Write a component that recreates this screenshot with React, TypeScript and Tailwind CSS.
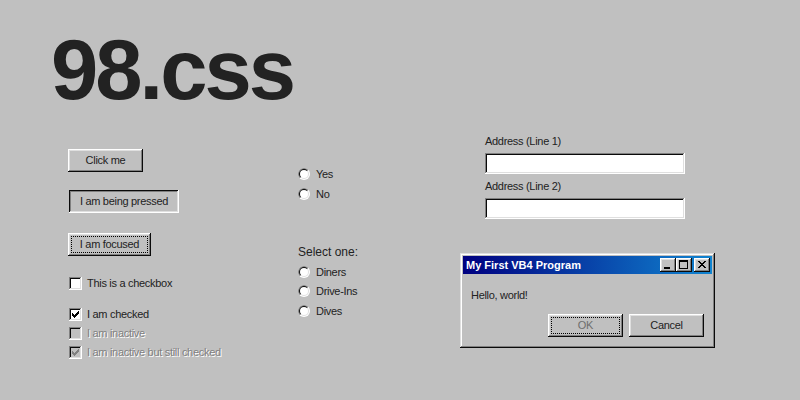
import React from "react";

const raised =
  "shadow-[inset_-1px_-1px_#0a0a0a,inset_1px_1px_#ffffff,inset_-2px_-2px_#808080,inset_2px_2px_#dfdfdf]";
const pressed =
  "shadow-[inset_-1px_-1px_#ffffff,inset_1px_1px_#0a0a0a,inset_-2px_-2px_#dfdfdf,inset_2px_2px_#808080]";
const field =
  "shadow-[inset_-1px_-1px_#ffffff,inset_1px_1px_#808080,inset_-2px_-2px_#dfdfdf,inset_2px_2px_#0a0a0a]";

function Check({ color }: { color: string }) {
  return (
    <svg width="7" height="7" viewBox="0 0 7 7" className="absolute left-[3px] top-[3px]">
      <path
        d="M7 0H6v1H5v1H4v1H3v1H2V3H1V2H0v3h1v1h1v1h1V6h1V5h1V4h1V3h1V0z"
        fill={color}
      />
    </svg>
  );
}

function Checkbox({
  label,
  checked,
  disabled,
  className,
}: {
  label: string;
  checked?: boolean;
  disabled?: boolean;
  className?: string;
}) {
  return (
    <div className={"flex items-center h-[13px] gap-[5px] " + (className ?? "")}>
      <span
        className={
          "relative ml-px w-[13px] h-[13px] " +
          field +
          (disabled ? " bg-[#c0c0c0]" : " bg-white")
        }
      >
        {checked && <Check color={disabled ? "#808080" : "#000000"} />}
      </span>
      <span
        className={
          "leading-[13px] " +
          (disabled ? "text-[#808080] [text-shadow:1px_1px_0_#ffffff]" : "")
        }
      >
        {label}
      </span>
    </div>
  );
}

function Radio({ label, className }: { label: string; className?: string }) {
  return (
    <div className={"flex items-center h-[12px] gap-[6px] " + (className ?? "")}>
      <svg width="12" height="12" viewBox="0 0 12 12">
        <circle cx="6" cy="6" r="6" fill="#ffffff" />
        <path d="M10.243 1.757A6 6 0 0 0 1.757 10.243Z" fill="#808080" />
        <circle cx="6" cy="6" r="5" fill="#dfdfdf" />
        <path d="M9.536 2.464A5 5 0 0 0 2.464 9.536Z" fill="#0a0a0a" />
        <circle cx="6" cy="6" r="4" fill="#ffffff" />
      </svg>
      <span className="leading-[13px]">{label}</span>
    </div>
  );
}

export default function App() {
  return (
    <div className="w-[800px] h-[400px] bg-[#c0c0c0] overflow-hidden text-[#222222] font-['Liberation_Sans',Arial,sans-serif]">
      <div className="pt-[27px] pl-[51px]">
        <h1 className="text-[85px] leading-[85px] font-bold tracking-[-3px] text-[#222222]">98.css</h1>
      </div>
      <div className="flex text-[11px] tracking-[-0.3px]">
        {/* left column */}
        <div className="w-[298px] shrink-0 pl-[68px] flex flex-col items-start">
          <button className={"mt-[37px] h-[23px] w-[75px] bg-[#c0c0c0] " + raised}>Click me</button>
          <button className={"mt-[18px] ml-px h-[23px] w-[110px] bg-[#c0c0c0] " + pressed}>
            I am being pressed
          </button>
          <button
            className={
              "mt-[20px] h-[23px] w-[83px] bg-[#c0c0c0] outline-1 outline-dotted outline-black outline-offset-[-4px] " +
              raised
            }
          >
            I am focused
          </button>
          <Checkbox className="mt-[21px]" label="This is a checkbox" />
          <Checkbox className="mt-[18px]" label="I am checked" checked />
          <Checkbox className="mt-[6px]" label="I am inactive" disabled />
          <Checkbox className="mt-[6px]" label="I am inactive but still checked" checked disabled />
        </div>

        {/* middle column */}
        <div className="w-[162px] shrink-0 flex flex-col items-start">
          <Radio className="mt-[56px]" label="Yes" />
          <Radio className="mt-[8px]" label="No" />
          <div className="mt-[45px] text-[12px] leading-[14px] tracking-normal">Select one:</div>
          <Radio className="mt-[7px]" label="Diners" />
          <Radio className="mt-[7px]" label="Drive-Ins" />
          <Radio className="mt-[8px]" label="Dives" />
        </div>

        {/* right column */}
        <div className="flex flex-col items-start">
          <label className="mt-[23px] ml-[25px] leading-[13px]">Address (Line 1)</label>
          <input className={"mt-[5px] ml-[25px] h-[21px] w-[200px] bg-white outline-none px-[3px] " + field} />
          <label className="mt-[6px] ml-[25px] leading-[13px]">Address (Line 2)</label>
          <input className={"mt-[5px] ml-[25px] h-[21px] w-[200px] bg-white outline-none px-[3px] " + field} />

          <div
            className={
              "mt-[34px] w-[255px] bg-[#c0c0c0] p-[3px] shadow-[inset_-1px_-1px_#0a0a0a,inset_1px_1px_#dfdfdf,inset_-2px_-2px_#808080,inset_2px_2px_#ffffff]"
            }
          >
            <div className="h-[18px] flex items-center justify-between pl-[3px] pr-[2px] bg-[linear-gradient(90deg,#000080,#1084d0)]">
              <span className="text-white font-bold tracking-normal leading-[13px]">My First VB4 Program</span>
              <div className="flex">
                <button aria-label="Minimize" className={"relative w-[16px] h-[14px] bg-[#c0c0c0] " + raised}>
                  <svg width="6" height="2" viewBox="0 0 6 2" className="absolute left-[4px] bottom-[3px]">
                    <rect width="6" height="2" fill="#000" />
                  </svg>
                </button>
                <button aria-label="Maximize" className={"relative w-[16px] h-[14px] bg-[#c0c0c0] " + raised}>
                  <svg width="9" height="9" viewBox="0 0 9 9" className="absolute left-[3px] top-[2px]">
                    <path fillRule="evenodd" d="M9 0H0v9h9V0zM8 2H1v6h7V2z" fill="#000" />
                  </svg>
                </button>
                <button aria-label="Close" className={"relative ml-[2px] w-[16px] h-[14px] bg-[#c0c0c0] " + raised}>
                  <svg width="8" height="7" viewBox="0 0 8 7" className="absolute left-[4px] top-[3px]">
                    <path
                      d="M0 0h2v1h1v1h2V1h1V0h2v1H7v1H6v1H5v1h1v1h1v1h1v1H6V6H5V5H3v1H2v1H0V6h1V5h1V4h1V3H2V2H1V1H0V0z"
                      fill="#000"
                    />
                  </svg>
                </button>
              </div>
            </div>
            <div className="m-[8px]">
              <p className="pt-[7px] leading-[13px]">Hello, world!</p>
              <div className="mt-[12px] flex justify-end gap-[6px]">
                <button
                  className={
                    "h-[23px] w-[75px] bg-[#c0c0c0] text-[#6e6e6e] outline-1 outline-dotted outline-black outline-offset-[-4px] " +
                    raised
                  }
                >
                  OK
                </button>
                <button className={"h-[23px] w-[75px] bg-[#c0c0c0] " + raised}>Cancel</button>
              </div>
            </div>
          </div>
        </div>
      </div>
    </div>
  );
}
